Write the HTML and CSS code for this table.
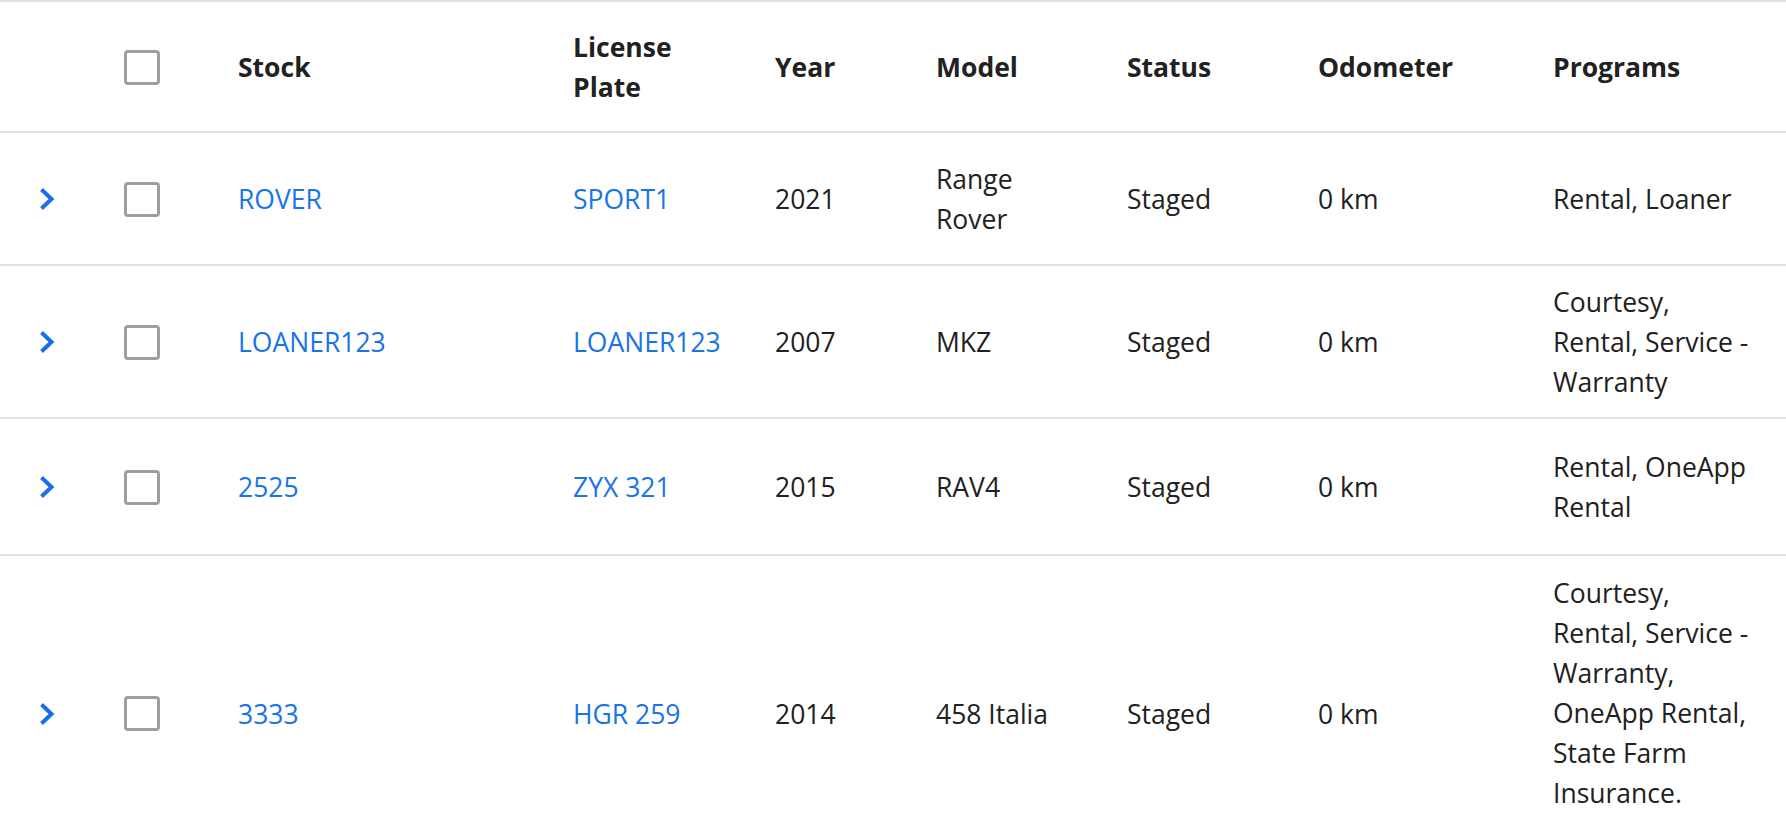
FILE: index.html
```html
<!DOCTYPE html>
<html lang="en">
<head>
<meta charset="utf-8">
<title>Vehicles</title>
<link rel="stylesheet" href="styles.css">
</head>
<body>
<div class="table">
  <div class="row head">
    <div class="cell c-exp"></div>
    <div class="cell c-chk"><span class="box"></span></div>
    <div class="cell">Stock</div>
    <div class="cell c-lic">License Plate</div>
    <div class="cell">Year</div>
    <div class="cell c-model">Model</div>
    <div class="cell">Status</div>
    <div class="cell">Odometer</div>
    <div class="cell c-prog">Programs</div>
  </div>
  <div class="row r1">
    <div class="cell c-exp"><svg class="chev" width="16" height="24" viewBox="0 0 16 24"><polyline points="2.5,2.5 12.5,12 2.5,21.5"/></svg></div>
    <div class="cell c-chk"><span class="box"></span></div>
    <div class="cell"><a class="link" href="#">ROVER</a></div>
    <div class="cell c-lic"><a class="link" href="#">SPORT1</a></div>
    <div class="cell">2021</div>
    <div class="cell c-model">Range Rover</div>
    <div class="cell">Staged</div>
    <div class="cell">0 km</div>
    <div class="cell c-prog">Rental, Loaner</div>
  </div>
  <div class="row r2">
    <div class="cell c-exp"><svg class="chev" width="16" height="24" viewBox="0 0 16 24"><polyline points="2.5,2.5 12.5,12 2.5,21.5"/></svg></div>
    <div class="cell c-chk"><span class="box"></span></div>
    <div class="cell"><a class="link" href="#">LOANER123</a></div>
    <div class="cell c-lic"><a class="link" href="#">LOANER123</a></div>
    <div class="cell">2007</div>
    <div class="cell c-model">MKZ</div>
    <div class="cell">Staged</div>
    <div class="cell">0 km</div>
    <div class="cell c-prog">Courtesy, Rental, Service - Warranty</div>
  </div>
  <div class="row r3">
    <div class="cell c-exp"><svg class="chev" width="16" height="24" viewBox="0 0 16 24"><polyline points="2.5,2.5 12.5,12 2.5,21.5"/></svg></div>
    <div class="cell c-chk"><span class="box"></span></div>
    <div class="cell"><a class="link" href="#">2525</a></div>
    <div class="cell c-lic"><a class="link" href="#">ZYX 321</a></div>
    <div class="cell">2015</div>
    <div class="cell c-model">RAV4</div>
    <div class="cell">Staged</div>
    <div class="cell">0 km</div>
    <div class="cell c-prog">Rental, OneApp Rental</div>
  </div>
  <div class="row r4">
    <div class="cell c-exp"><svg class="chev" width="16" height="24" viewBox="0 0 16 24"><polyline points="2.5,2.5 12.5,12 2.5,21.5"/></svg></div>
    <div class="cell c-chk"><span class="box"></span></div>
    <div class="cell"><a class="link" href="#">3333</a></div>
    <div class="cell c-lic"><a class="link" href="#">HGR 259</a></div>
    <div class="cell">2014</div>
    <div class="cell c-model">458 Italia</div>
    <div class="cell">Staged</div>
    <div class="cell">0 km</div>
    <div class="cell c-prog c-top">Courtesy, Rental, Service - Warranty, OneApp Rental, State Farm Insurance.</div>
  </div>
</div>
</body>
</html>
```
FILE: styles.css
```css
html, body {
  margin: 0;
  padding: 0;
  background: #ffffff;
}

body {
  font-family: "Open Sans", "Noto Sans", sans-serif;
  font-size: 26.5px;
  line-height: 40px;
  color: #212121;
}

.table {
  border-top: 2px solid #e2e2e2;
}

.row {
  display: grid;
  grid-template-columns: 124px 114px 335px 202px 161px 191px 191px 235px 233px;
  align-items: center;
  min-height: 131px;
  border-bottom: 2px solid #e2e2e2;
}

.head {
  font-weight: 700;
  min-height: 129px;
}

.r3 {
  min-height: 135px;
}

.r4 {
  min-height: 314px;
}

.cell {
  padding: 16px 0 15px;
}

.c-top {
  align-self: start;
  padding-top: 17px;
}

.c-exp {
  padding-left: 39px;
  display: flex;
  align-items: center;
}

.c-chk {
  display: flex;
  align-items: center;
}

.c-lic {
  padding-right: 42px;
}

.c-model {
  padding-right: 56px;
}

.c-prog {
  padding-right: 30px;
}

.chev {
  display: block;
  fill: none;
  stroke: #1a6fe8;
  stroke-width: 4;
  stroke-linejoin: miter;
}

.box {
  display: block;
  width: 36px;
  height: 35px;
  box-sizing: border-box;
  border: 3.5px solid #9e9e9e;
  border-radius: 4px;
}

.link {
  color: #1a73e8;
  text-decoration: none;
}
```
